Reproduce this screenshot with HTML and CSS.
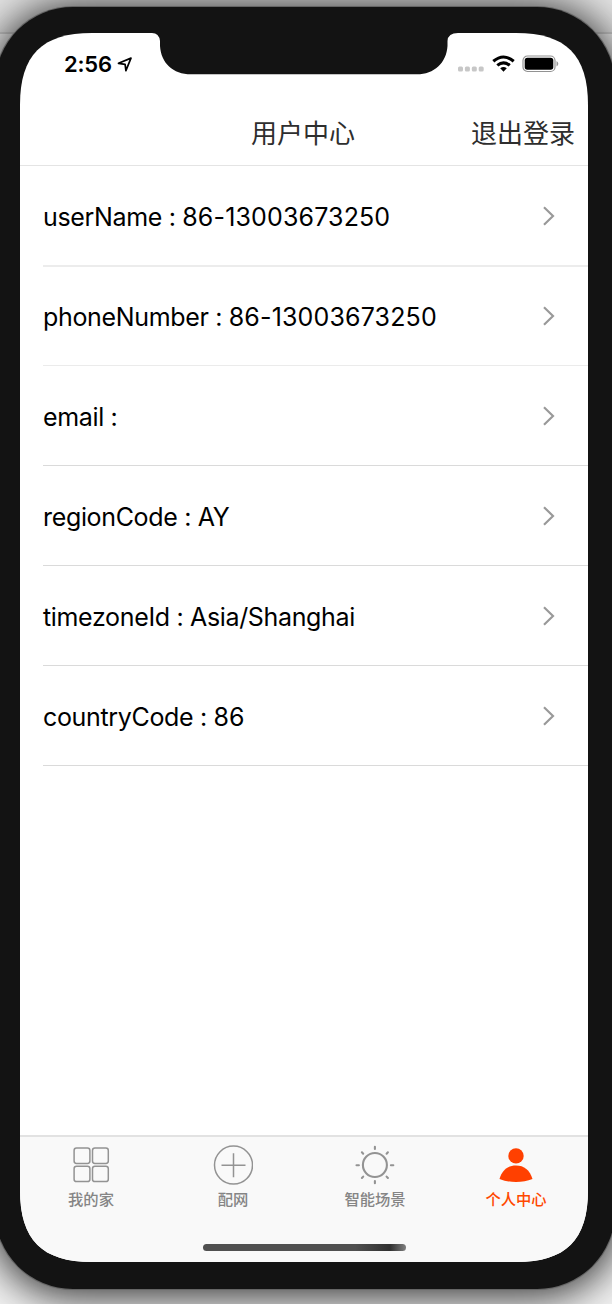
FILE: index.html
```
<!DOCTYPE html>
<html lang="zh-CN">
<head>
<meta charset="utf-8">
<title>用户中心</title>
<link rel="stylesheet" href="styles.css">
</head>
<body>
<div class="device">
  <div class="screen">
    <svg class="notch" viewBox="0 0 308 42" width="308" height="42"><path d="M0 0H308Q298 0 297.500 8V13C296.500 30 284 41.300 267 41.300H41C23 41.300 11 30 10 13V8Q9 0 2 0Z"/></svg>
    <header class="status">
      <div class="clock"><span>2:56</span>
        <svg width="16" height="17" viewBox="0 0 16 17"><path class="arrow" d="M1.500 7.300L14 2.100L8.900 14.600L8.100 8.400Z"/></svg>
      </div>
      <div class="signals">
        <svg class="cell" width="26" height="6" viewBox="0 0 26 6"><g fill="#c7c7c7"><rect x="0" y=".5" width="5" height="5" rx="1.500"/><rect x="6.900" y=".5" width="5" height="5" rx="1.500"/><rect x="13.800" y=".5" width="5" height="5" rx="1.500"/><rect x="20.700" y=".5" width="5" height="5" rx="1.500"/></g></svg>
        <svg class="wifi" width="23" height="18" viewBox="0 0 23 18"><path class="wave" d="M1.300 6.300Q11.500-2.300 21.700 6.300M5.300 10.400Q11.500 5.200 17.700 10.400"/><path d="M8.200 13.300Q11.500 10.700 14.800 13.300L11.500 16.800Z"/></svg>
        <svg class="battery" width="37" height="18" viewBox="0 0 37 18"><rect class="shell" x="1" y="1" width="32" height="15.500" rx="4.500"/><rect x="2.700" y="2.700" width="28.600" height="12.100" rx="2.700"/><path fill="#999" d="M34.500 6Q36.300 7 36.300 8.800T34.500 11.600Z"/></svg>
      </div>
    </header>
    <nav class="navbar">
      <h1>用户中心</h1>
      <a class="logout">退出登录</a>
    </nav>
    <main class="list">
      <div class="row wide-line"><span>userName : <b>86-13003673250</b></span><svg class="chev" viewBox="0 0 12 20"><path d="M1 1.200L10 10L1 18.800"/></svg></div>
      <div class="row light-line"><span>phoneNumber : <b>86-13003673250</b></span><svg class="chev" viewBox="0 0 12 20"><path d="M1 1.200L10 10L1 18.800"/></svg></div>
      <div class="row"><span>email :</span><svg class="chev" viewBox="0 0 12 20"><path d="M1 1.200L10 10L1 18.800"/></svg></div>
      <div class="row"><span>regionCode : AY</span><svg class="chev" viewBox="0 0 12 20"><path d="M1 1.200L10 10L1 18.800"/></svg></div>
      <div class="row"><span>timezoneId : Asia/Shanghai</span><svg class="chev" viewBox="0 0 12 20"><path d="M1 1.200L10 10L1 18.800"/></svg></div>
      <div class="row"><span>countryCode : <b>86</b></span><svg class="chev" viewBox="0 0 12 20"><path d="M1 1.200L10 10L1 18.800"/></svg></div>
    </main>
    <footer class="bottom">
      <div class="tabs">
        <a class="tab"><svg class="icon" viewBox="0 0 40 40"><g stroke-width="1.500"><rect x="3.100" y="3.100" width="15.800" height="15.300" rx="2.400"/><rect x="21.500" y="3.100" width="15.800" height="15.300" rx="2.400"/><rect x="3.100" y="21.300" width="15.800" height="15.300" rx="2.400"/><rect x="21.500" y="21.300" width="15.800" height="15.300" rx="2.400"/></g></svg><span>我的家</span></a>
        <a class="tab"><svg class="icon" viewBox="0 0 40 40"><g stroke-width="1.500"><circle cx="20.500" cy="20.100" r="19"/><path d="M8.500 20.200H32.500M20.500 8.200V32.200"/></g></svg><span>配网</span></a>
        <a class="tab"><svg class="icon" viewBox="0 0 40 40"><g stroke-width="2.100"><circle cx="19.900" cy="20" r="12"/><path stroke-linecap="round" d="M19.900 1.800V4M19.900 36V38.200M1.500 20.200H3.900M35.900 20.200H38.300M6.900 7.300L8.200 8.700M31.600 8.700L32.900 7.300M6.900 33L8.200 31.600M31.600 31.600L32.900 33"/></g></svg><span>智能场景</span></a>
        <a class="tab active"><svg class="icon" viewBox="0 0 40 40"><circle cx="20" cy="10.900" r="7.700"/><path d="M3.500 34C6 25 12 20.400 20 20.400S34 25 36.500 34Q29 37 20 37T3.500 34Z"/></svg><span>个人中心</span></a>
      </div>
      <div class="home"></div>
    </footer>
  </div>
</div>
</body>
</html>
```
FILE: styles.css
```
body {
  margin: 0;
  width: 612px;
  height: 1304px;
  overflow: hidden;
  background: linear-gradient(#e3e3e3 0 32px, #cfcfcf 32px 34px, #f2f2f2 34px);
  font-family: Inter, "Noto Sans CJK SC", sans-serif;
}
.device {
  box-sizing: border-box;
  width: 620px;
  height: 1282px;
  margin: 7px 0 0 -5px;
  padding: 26px 26px 26px 25px;
  border-radius: 78px;
  background: #131313;
  box-shadow: 0 0 0 1px #656565, 0 3px 40px 5px rgba(0, 0, 0, .8);
}
.screen {
  position: relative;
  width: 568px;
  height: 1229px;
  display: flex;
  flex-direction: column;
  background: #fff;
  clip-path: path("M0 72C0 22 22 0 72 0H496C546 0 568 22 568 72V1157C568 1207 546 1229 496 1229H72C22 1229 0 1207 0 1157Z");
}
.notch {
  position: absolute;
  top: 0;
  left: 130px;
  fill: #131313;
}
.status {
  box-sizing: border-box;
  height: 70px;
  padding: 18px 29px 0 44px;
  display: flex;
  justify-content: space-between;
  align-items: flex-start;
}
.clock {
  display: flex;
  align-items: center;
  gap: 5px;
  font-size: 22px;
  line-height: 26px;
  font-weight: 600;
  letter-spacing: -.2px;
}
.arrow {
  fill: none;
  stroke: #000;
  stroke-width: 1.700;
  stroke-linejoin: round;
}
.signals {
  display: flex;
  align-items: flex-start;
  padding-top: 4px;
}
.cell { margin: 11px 8px 0 0; }
.wifi { margin-right: 7.500px; }
.wave {
  fill: none;
  stroke: #000;
  stroke-width: 3.100;
}
.shell {
  fill: none;
  stroke: #929292;
  stroke-width: 1.200;
}
.navbar {
  box-sizing: border-box;
  height: 63px;
  border-bottom: 1px solid #e4e4e4;
  padding: 11px 13px 0 0;
  display: grid;
  grid-template-columns: 1fr auto;
  color: #2e2e2e;
  font-size: 26px;
  line-height: 40px;
}
.navbar h1 {
  margin: 0;
  padding-left: 231px;
  font-size: 26px;
  font-weight: 400;
}
.list {
  flex: 1;
  padding-left: 23px;
}
.row {
  box-sizing: border-box;
  height: 100px;
  padding-right: 33px;
  border-bottom: 1px solid #dadada;
  display: flex;
  justify-content: space-between;
  align-items: center;
  font-size: 25px;
  letter-spacing: -.34px;
}
.row span { padding-top: 2px; }
.row b {
  font-weight: 400;
  letter-spacing: .15px;
}
.wide-line {
  height: 101px;
  border-bottom: 2px solid #ececec;
}
.light-line {
  height: 99px;
  border-color: #ebebeb;
}
.chev {
  width: 12px;
  height: 20px;
  fill: none;
  stroke: #999;
  stroke-width: 2.200;
}
.bottom {
  box-sizing: border-box;
  height: 127px;
  border-top: 2px solid #e2e2e2;
  background: #f9f9f9;
}
.tabs {
  display: grid;
  grid-template-columns: repeat(4, 1fr);
  height: 107px;
}
.tab {
  display: flex;
  flex-direction: column;
  align-items: center;
  padding-top: 8px;
  font-size: 15.300px;
  line-height: 22px;
  font-weight: 500;
  color: #858585;
}
.tab span { margin-top: 4px; }
.icon {
  width: 40px;
  height: 40px;
  fill: none;
  stroke: #939393;
}
.active {
  color: #ff4800;
  padding-right: 2px;
}
.active .icon {
  fill: #ff4000;
  stroke: none;
}
.home {
  width: 203px;
  height: 7px;
  margin: 0 auto 0 182.500px;
  border-radius: 4px;
  background: linear-gradient(90deg, #505050 0 75%, #303030 92%, #808080);
}
```
